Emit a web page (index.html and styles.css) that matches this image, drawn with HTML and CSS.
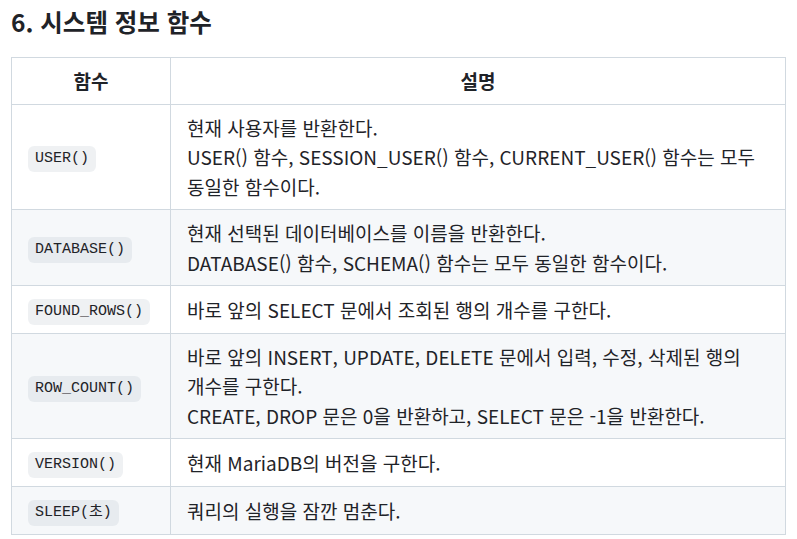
FILE: index.html
```html
<!DOCTYPE html>
<html lang="ko">
<head>
<meta charset="utf-8">
<link rel="stylesheet" href="styles.css">
</head>
<body>
<h2 class="title">6. 시스템 정보 함수</h2>
<table class="fn-table">
  <thead>
    <tr><th class="col-fn">함수</th><th>설명</th></tr>
  </thead>
  <tbody>
    <tr>
      <td class="col-fn"><code>USER()</code></td>
      <td>현재 사용자를 반환한다.<br>USER() 함수, SESSION_USER() 함수, CURRENT_USER() 함수는 모두 동일한 함수이다.</td>
    </tr>
    <tr>
      <td class="col-fn"><code>DATABASE()</code></td>
      <td>현재 선택된 데이터베이스를 이름을 반환한다.<br>DATABASE() 함수, SCHEMA() 함수는 모두 동일한 함수이다.</td>
    </tr>
    <tr>
      <td class="col-fn"><code>FOUND_ROWS()</code></td>
      <td>바로 앞의 SELECT 문에서 조회된 행의 개수를 구한다.</td>
    </tr>
    <tr>
      <td class="col-fn"><code>ROW_COUNT()</code></td>
      <td>바로 앞의 INSERT, UPDATE, DELETE 문에서 입력, 수정, 삭제된 행의 개수를 구한다.<br>CREATE, DROP 문은 0을 반환하고, SELECT 문은 -1을 반환한다.</td>
    </tr>
    <tr>
      <td class="col-fn"><code>VERSION()</code></td>
      <td>현재 MariaDB의 버전을 구한다.</td>
    </tr>
    <tr>
      <td class="col-fn"><code>SLEEP(초)</code></td>
      <td>쿼리의 실행을 잠깐 멈춘다.</td>
    </tr>
  </tbody>
</table>
</body>
</html>
```

FILE: styles.css
```css
html, body {
  margin: 0;
  padding: 0;
  background: #ffffff;
}
body {
  padding: 0 11px;
  color: #1f2328;
  font-family: "Noto Sans CJK KR", "Noto Sans", sans-serif;
  font-size: 19px;
}
.title {
  margin: 4px 0 17px;
  font-size: 24.5px;
  line-height: 36px;
  font-weight: 700;
}
.fn-table {
  width: 100%;
  border-collapse: collapse;
  border-spacing: 0;
  word-break: keep-all;
}
.fn-table th,
.fn-table td {
  border: 1px solid #d1d9e0;
  padding: 8px 16px;
  line-height: 29.5px;
}
.fn-table th {
  font-weight: 700;
  text-align: center;
}
.fn-table td.col-fn,
.fn-table th.col-fn {
  width: 126px;
}
.fn-table tbody tr:nth-child(even) {
  background: #f6f8fa;
}
.fn-table code {
  display: inline-block;
  vertical-align: middle;
  font-family: "Liberation Mono", "DejaVu Sans Mono", "Noto Sans CJK KR", monospace;
  font-size: 15px;
  line-height: 18px;
  padding: 4px 7px;
  border-radius: 6px;
  background: rgba(175, 184, 193, 0.2);
  white-space: nowrap;
}
```
